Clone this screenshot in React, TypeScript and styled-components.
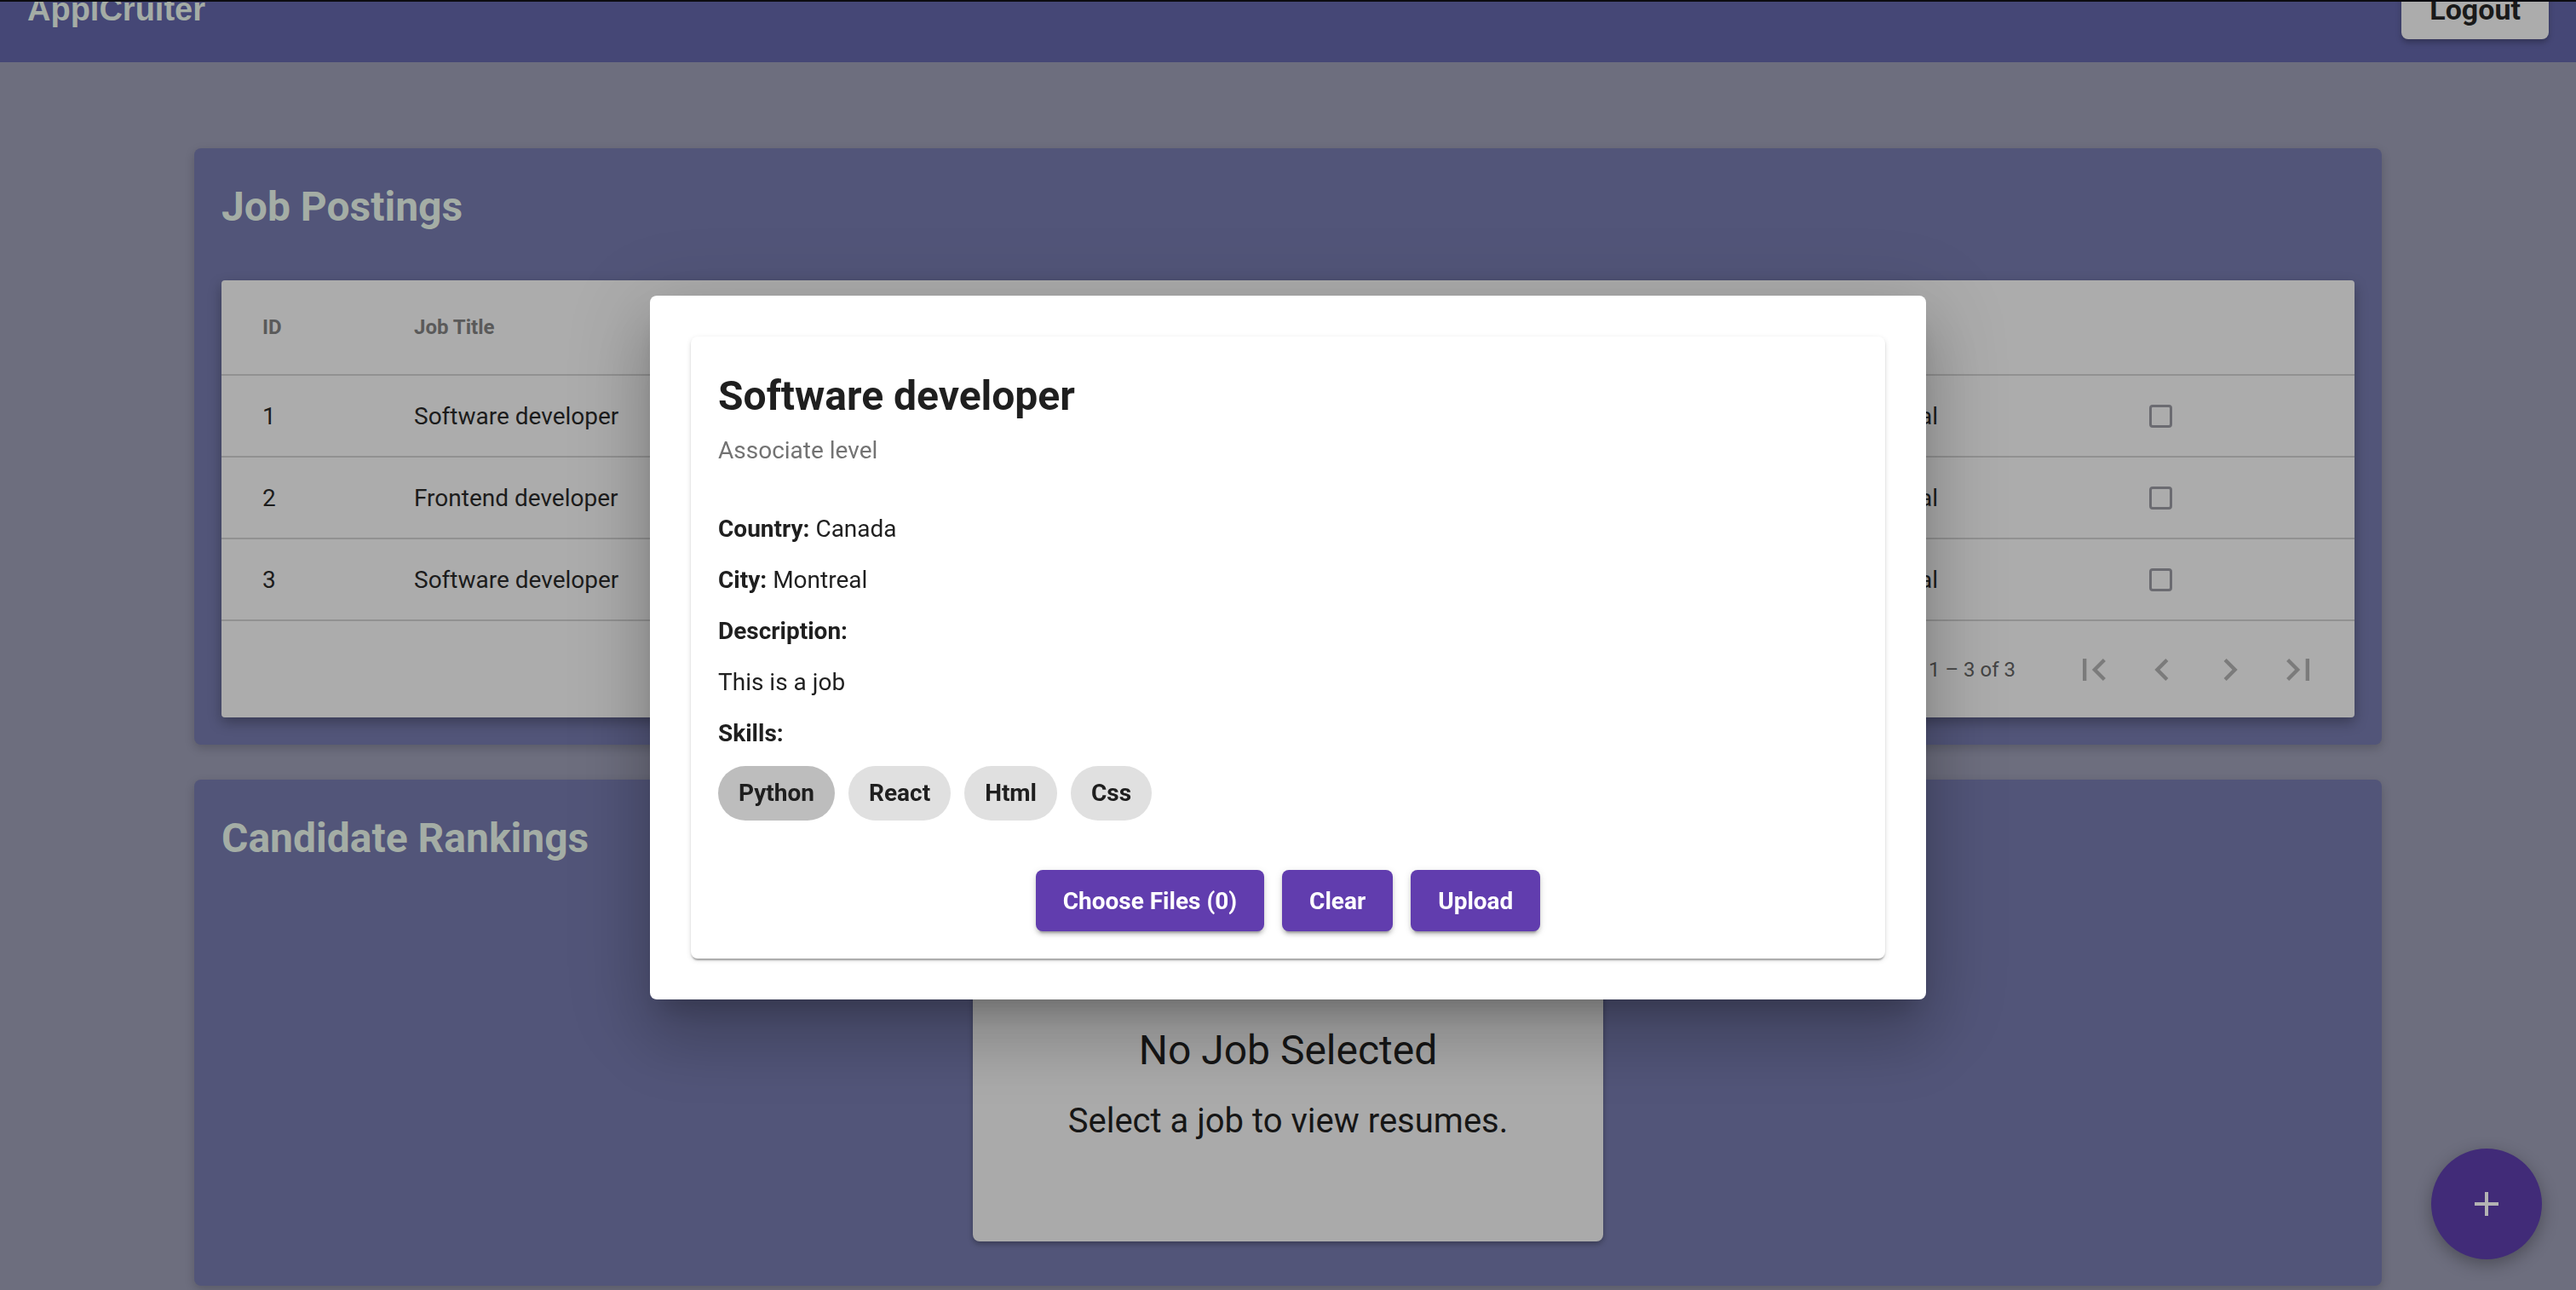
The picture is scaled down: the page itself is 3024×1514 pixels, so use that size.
import React from "react";
import styled, { createGlobalStyle } from "styled-components";

const GlobalStyle = createGlobalStyle`
  html, body {
    margin: 0;
    padding: 0;
  }
  body {
    background: #6d6e7e;
    font-family: Roboto, "Noto Sans", Arial, sans-serif;
    height: 1514px;
    overflow: hidden;
  }
  * {
    box-sizing: border-box;
  }
`;

const TopBar = styled.header`
  height: 73px;
  background: #454776;
  border-top: 2px solid #0c0c10;
  display: flex;
  justify-content: space-between;
  align-items: flex-start;
  padding: 0 32px;
  overflow: hidden;
`;

const Brand = styled.div`
  font-family: "Liberation Sans", Arial, sans-serif;
  font-weight: 700;
  font-size: 38px;
  line-height: 38px;
  color: #a4aca5;
  margin-top: -10px;
`;

const LogoutButton = styled.button`
  margin-top: -26px;
  height: 70px;
  padding: 0 33px;
  border: none;
  border-radius: 8px;
  background: #acacac;
  color: #1a1a1a;
  font-family: Roboto, sans-serif;
  font-weight: 700;
  font-size: 34px;
  line-height: 70px;
  box-shadow: 0 4px 6px rgba(0, 0, 0, 0.25);
`;

const Main = styled.main`
  padding: 101px 228px 0;
  display: flex;
  flex-direction: column;
  gap: 41px;
`;

const Panel = styled.section<{ $bottom?: number }>`
  background: #525579;
  border-radius: 8px;
  padding: 32px 32px ${(p) => p.$bottom ?? 32}px;
  box-shadow: 0 4px 12px rgba(0, 0, 0, 0.18);
`;

const PanelTitle = styled.h2`
  margin: 0 0 50px;
  font-size: 48px;
  font-weight: 700;
  line-height: 73px;
  color: #a4ada5;
`;

const TableCard = styled.div`
  background: #acacac;
  border-radius: 4px;
  box-shadow: 0 6px 16px rgba(0, 0, 0, 0.3);
`;

const Row = styled.div<{ $head?: boolean }>`
  display: grid;
  grid-template-columns: 178px 420px 420px 420px 418px 345px 1fr;
  align-items: center;
  height: ${(p) => (p.$head ? 112 : 96)}px;
  padding-left: 48px;
  border-bottom: 2px solid #919191;
  font-size: ${(p) => (p.$head ? 24 : 28)}px;
  font-weight: ${(p) => (p.$head ? 700 : 400)};
  color: ${(p) => (p.$head ? "#5a5a5a" : "#1c1c1c")};
  white-space: nowrap;
`;

const CheckCell = styled.div`
  padding-left: 14px;
  display: flex;
`;

const Checkbox = styled.span`
  width: 27px;
  height: 27px;
  border: 3.5px solid #6b6b71;
  border-radius: 4px;
`;

const Pager = styled.div`
  height: 113px;
  display: flex;
  align-items: center;
  justify-content: flex-end;
  padding-right: 26px;
  font-size: 24px;
  color: #454545;
`;

const PagerLabel = styled.span<{ $gap: number }>`
  margin-right: ${(p) => p.$gap}px;
`;

const PageButton = styled.span`
  width: 80px;
  height: 80px;
  display: flex;
  align-items: center;
  justify-content: center;
  color: #7b7b7b;
`;

const EmptyCard = styled.div`
  width: 740px;
  height: 387px;
  margin: 0 auto;
  padding-top: 131px;
  background: #aaaaaa;
  border-radius: 8px;
  text-align: center;
  box-shadow: 0 3px 6px rgba(0, 0, 0, 0.3);
`;

const EmptyTitle = styled.div`
  font-size: 48px;
  line-height: 64px;
  color: #161616;
`;

const EmptyText = styled.div`
  margin-top: 19px;
  font-size: 40px;
  line-height: 64px;
  color: #161616;
`;

const Overlay = styled.div`
  position: fixed;
  inset: 0;
  padding-top: 6px;
  display: flex;
  align-items: center;
  justify-content: center;
`;

const Dialog = styled.div`
  width: 1498px;
  padding: 48px;
  background: #ffffff;
  border-radius: 8px;
  box-shadow: 0 22px 30px -14px rgba(0, 0, 0, 0.2),
    0 48px 76px 6px rgba(0, 0, 0, 0.14), 0 18px 92px 16px rgba(0, 0, 0, 0.12);
`;

const JobCard = styled.div`
  padding: 38px 32px 32px;
  border-radius: 8px;
  background: #ffffff;
  color: #1f1f1f;
  box-shadow: 0 4px 2px -2px rgba(0, 0, 0, 0.2), 0 2px 2px 0 rgba(0, 0, 0, 0.14),
    0 2px 6px 0 rgba(0, 0, 0, 0.12);
`;

const JobTitle = styled.h3`
  margin: 0;
  font-size: 48px;
  font-weight: 700;
  line-height: 64px;
`;

const JobLevel = styled.div`
  margin-top: 2px;
  font-size: 28px;
  line-height: 60px;
  color: #737373;
`;

const Details = styled.div`
  margin-top: 32px;
`;

const Line = styled.div`
  font-size: 28px;
  line-height: 60px;

  b {
    font-weight: 700;
  }
`;

const Chips = styled.div`
  margin-top: 8px;
  display: flex;
  gap: 16px;
`;

const Chip = styled.span<{ $active?: boolean }>`
  height: 64px;
  padding: 0 24px;
  border-radius: 32px;
  background: ${(p) => (p.$active ? "#bdbdbd" : "#e0e0e0")};
  font-size: 28px;
  font-weight: 700;
  line-height: 64px;
  color: #1f1f1f;
`;

const Actions = styled.div`
  margin-top: 58px;
  display: flex;
  justify-content: center;
  gap: 21px;
`;

const PurpleButton = styled.button`
  height: 72px;
  padding: 0 32px;
  border: none;
  border-radius: 8px;
  background: #613dae;
  color: #ffffff;
  font-family: Roboto, sans-serif;
  font-size: 28px;
  font-weight: 700;
  box-shadow: 0 6px 2px -4px rgba(0, 0, 0, 0.2), 0 4px 4px 0 rgba(0, 0, 0, 0.14),
    0 2px 10px 0 rgba(0, 0, 0, 0.12);
`;

const Fab = styled.button`
  position: fixed;
  right: 40px;
  bottom: 36px;
  width: 130px;
  height: 130px;
  border: none;
  border-radius: 50%;
  background: #412b78;
  display: flex;
  align-items: center;
  justify-content: center;
  color: #b3b3b3;
  box-shadow: 0 6px 20px rgba(0, 0, 0, 0.3);
`;

const Icon = ({ d, size = 52 }: { d: string; size?: number }) => (
  <svg width={size} height={size} viewBox="0 0 24 24" fill="currentColor">
    <path d={d} />
  </svg>
);

const jobs = [
  { id: 1, title: "Software developer" },
  { id: 2, title: "Frontend developer" },
  { id: 3, title: "Software developer" },
];

const skills = ["Python", "React", "Html", "Css"];

const App = () => {
  return (
    <>
      <GlobalStyle />
      <TopBar>
        <Brand>ApplCruiter</Brand>
        <LogoutButton>Logout</LogoutButton>
      </TopBar>
      <Main>
        <Panel>
          <PanelTitle>Job Postings</PanelTitle>
          <TableCard>
            <Row $head>
              <div>ID</div>
              <div>Job Title</div>
              <div>Level</div>
              <div>Description</div>
              <div>Country</div>
              <div>City</div>
              <div />
            </Row>
            {jobs.map((job) => (
              <Row key={job.id}>
                <div>{job.id}</div>
                <div>{job.title}</div>
                <div>Associate level</div>
                <div>This is a job</div>
                <div>Canada</div>
                <div>Montreal</div>
                <CheckCell>
                  <Checkbox />
                </CheckCell>
              </Row>
            ))}
            <Pager>
              <PagerLabel $gap={20}>Rows per page:</PagerLabel>
              <PagerLabel $gap={56}>5</PagerLabel>
              <PagerLabel $gap={52}>1 – 3 of 3</PagerLabel>
              <PageButton>
                <Icon d="M18.41 16.59L13.82 12l4.59-4.59L17 6l-6 6 6 6zM6 6h2v12H6z" />
              </PageButton>
              <PageButton>
                <Icon d="M15.41 16.59L10.83 12l4.58-4.59L14 6l-6 6 6 6 1.41-1.41z" />
              </PageButton>
              <PageButton>
                <Icon d="M8.59 16.59L13.17 12 8.59 7.41 10 6l6 6-6 6-1.41-1.41z" />
              </PageButton>
              <PageButton>
                <Icon d="M5.59 7.41L10.18 12l-4.59 4.59L7 18l6-6-6-6zM16 6h2v12h-2z" />
              </PageButton>
            </Pager>
          </TableCard>
        </Panel>
        <Panel $bottom={52}>
          <PanelTitle>Candidate Rankings</PanelTitle>
          <EmptyCard>
            <EmptyTitle>No Job Selected</EmptyTitle>
            <EmptyText>Select a job to view resumes.</EmptyText>
          </EmptyCard>
        </Panel>
      </Main>

      <Fab>
        <Icon d="M19 13h-6v6h-2v-6H5v-2h6V5h2v6h6v2z" size={48} />
      </Fab>

      <Overlay>
        <Dialog>
          <JobCard>
            <JobTitle>Software developer</JobTitle>
            <JobLevel>Associate level</JobLevel>
            <Details>
              <Line>
                <b>Country:</b> Canada
              </Line>
              <Line>
                <b>City:</b> Montreal
              </Line>
              <Line>
                <b>Description:</b>
              </Line>
              <Line>This is a job</Line>
              <Line>
                <b>Skills:</b>
              </Line>
            </Details>
            <Chips>
              {skills.map((skill, i) => (
                <Chip key={skill} $active={i === 0}>
                  {skill}
                </Chip>
              ))}
            </Chips>
            <Actions>
              <PurpleButton>Choose Files (0)</PurpleButton>
              <PurpleButton>Clear</PurpleButton>
              <PurpleButton>Upload</PurpleButton>
            </Actions>
          </JobCard>
        </Dialog>
      </Overlay>
    </>
  );
};

export default App;
